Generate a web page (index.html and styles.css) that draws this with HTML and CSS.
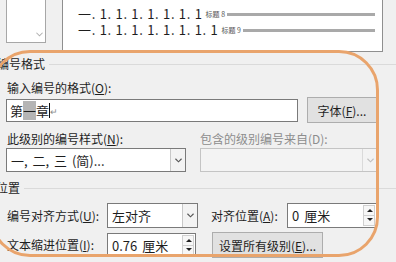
FILE: index.html
```html
<!DOCTYPE html>
<html lang="zh-CN">
<head>
    <meta charset="UTF-8">
    <meta name="viewport" content="width=device-width, initial-scale=1.0">
    <title>定义新多级列表</title>
    <link rel="stylesheet" href="styles.css">
</head>
<body>
    <div class="dialog">
        <!-- 级别列表 + 预览 -->
        <div class="top">
            <div class="levels">
                <svg class="levels-chev" viewBox="0 0 8 5"><polyline points="0.5,0.5 4,4 7.5,0.5"/></svg>
            </div>
            <div class="preview">
                <div class="pv-line">
                    <span class="pv-num">一. 1. 1. 1. 1. 1. 1. 1</span>
                    <span class="pv-tag">标题 8</span>
                    <span class="pv-bar"></span>
                </div>
                <div class="pv-line">
                    <span class="pv-num">一. 1. 1. 1. 1. 1. 1. 1. 1</span>
                    <span class="pv-tag">标题 9</span>
                    <span class="pv-bar"></span>
                </div>
            </div>
        </div>

        <!-- 编号格式 -->
        <div class="group-title title-format"><span class="title-text">编号格式</span><span class="title-line"></span></div>

        <div class="label label-input">输入编号的格式(<u>O</u>):</div>
        <div class="row row-input">
            <div class="textbox format-box"><span>第</span><span class="sel">一</span><span>章</span><span class="caret"></span><span class="para">↵</span></div>
            <button class="btn btn-font">字体(<u>F</u>)...</button>
        </div>

        <div class="row row-labels">
            <div class="label col-left">此级别的编号样式(<u>N</u>):</div>
            <div class="label disabled">包含的级别编号来自(D):</div>
        </div>
        <div class="row row-selects">
            <div class="select style-select">
                <span class="value">一, 二, 三 (简)...</span>
                <span class="drop"><svg viewBox="0 0 8 5"><polyline points="0.5,0.5 4,4 7.5,0.5"/></svg></span>
            </div>
            <div class="select include-select is-disabled">
                <span class="value"></span>
                <span class="drop"><svg viewBox="0 0 8 5"><polyline points="0.5,0.5 4,4 7.5,0.5"/></svg></span>
            </div>
        </div>

        <!-- 位置 -->
        <div class="group-title title-pos"><span class="title-text">位置</span><span class="title-line"></span></div>

        <div class="row row-pos1">
            <div class="label pos-label">编号对齐方式(<u>U</u>):</div>
            <div class="select align-select">
                <span class="value">左对齐</span>
                <span class="drop"><svg viewBox="0 0 8 5"><polyline points="0.5,0.5 4,4 7.5,0.5"/></svg></span>
            </div>
            <div class="label at-label">对齐位置(<u>A</u>):</div>
            <div class="spin at-spin">
                <span class="value">0 厘米</span>
                <span class="spin-btns"><span class="up"></span><span class="down"></span></span>
            </div>
        </div>
        <div class="row row-pos2">
            <div class="label pos-label">文本缩进位置(<u>I</u>):</div>
            <div class="spin indent-spin">
                <span class="value">0.76 厘米</span>
                <span class="spin-btns"><span class="up"></span><span class="down"></span></span>
            </div>
            <button class="btn btn-all">设置所有级别(<u>E</u>)...</button>
        </div>
    </div>

    <!-- 标注圈 -->
    <div class="ring"></div>
</body>
</html>
```

FILE: styles.css
```css
body {
    margin: 0;
    width: 396px;
    height: 262px;
    overflow: hidden;
    position: relative;
    background-color: #f0f0f0;
    font-family: "Noto Sans CJK SC", sans-serif;
    font-size: 12px;
    color: #1e1e1e;
}
u {
    text-decoration: underline;
    text-underline-offset: 1px;
}
.dialog {
    display: flex;
    flex-direction: column;
}
.top {
    display: flex;
    height: 52px;
}
.levels {
    position: relative;
    margin: -1px 0 0 6px;
    width: 40px;
    height: 44px;
    box-sizing: border-box;
    background-color: white;
    border: 1px solid #a7a7a7;
}
.levels-chev {
    position: absolute;
    right: 2px;
    bottom: 5px;
    width: 7px;
    height: 5px;
    fill: none;
    stroke: #b0b0b0;
    stroke-width: 1.2;
}
.preview {
    margin: -1px 0 0 16px;
    width: 321px;
    height: 53px;
    box-sizing: border-box;
    background-color: white;
    border: 1px solid #8f8f8f;
    padding: 6px 7px 0 15px;
}
.pv-line {
    display: flex;
    align-items: center;
    height: 16px;
}
.pv-num {
    font-size: 13px;
    letter-spacing: 0.7px;
    white-space: nowrap;
    line-height: 16px;
}
.pv-tag {
    font-size: 7px;
    color: #555;
    margin-left: 3px;
    white-space: nowrap;
}
.pv-bar {
    flex: 1;
    height: 3px;
    margin-left: 2px;
    background-color: #a9a9a9;
}
.group-title {
    display: flex;
    align-items: center;
    height: 16px;
    line-height: 16px;
}
.title-text {
    white-space: nowrap;
}
.title-line {
    flex: 1;
    height: 1px;
    margin-left: 4px;
    background-color: #dadada;
}
.title-format {
    margin: 4px 0 0 -3px;
}
.title-pos {
    margin: 8px 0 0 -4px;
}
.label {
    height: 16px;
    line-height: 16px;
    white-space: nowrap;
}
.label-input {
    margin: 8px 0 0 7px;
}
.row {
    display: flex;
    align-items: center;
}
.row-input {
    margin: 1px 0 0 6px;
    height: 26px;
    gap: 9px;
}
.textbox {
    display: flex;
    align-items: center;
    box-sizing: border-box;
    height: 23px;
    background-color: white;
    border: 1px solid #7a7a7a;
    padding-left: 3px;
    font-size: 13px;
}
.format-box {
    width: 292px;
}
.sel {
    background-color: #b5b5b5;
}
.caret {
    width: 1px;
    height: 15px;
    background-color: #111;
}
.para {
    font-size: 9px;
    color: #8a8a8a;
    margin-top: 3px;
}
.btn {
    box-sizing: border-box;
    height: 26px;
    background-color: #e1e1e1;
    border: 1px solid #adadad;
    font-family: inherit;
    font-size: 12px;
    color: #1e1e1e;
    padding: 0;
}
.btn-font {
    width: 70px;
}
.row-labels {
    margin: 8px 0 0 7px;
}
.col-left {
    width: 193px;
}
.disabled {
    color: #8d8d8d;
}
.row-selects {
    margin: 1px 0 0 6px;
    gap: 14px;
}
.select, .spin {
    display: flex;
    align-items: center;
    box-sizing: border-box;
    height: 24px;
    background-color: white;
    border: 1px solid #7a7a7a;
    font-size: 13px;
}
.select .value, .spin .value {
    flex: 1;
    padding-left: 4px;
    white-space: nowrap;
    word-spacing: 2px;
}
.drop {
    display: flex;
    align-items: center;
    justify-content: center;
    width: 15px;
    height: 100%;
    box-sizing: border-box;
    border-left: 1px solid #c8c8c8;
    background-color: #f3f3f3;
}
.drop svg {
    width: 7px;
    height: 5px;
    fill: none;
    stroke: #555;
    stroke-width: 1.3;
}
.style-select {
    width: 180px;
}
.include-select {
    width: 178px;
}
.is-disabled {
    background-color: #f3f3f3;
    border-color: #c4c4c4;
}
.is-disabled .drop {
    border-left-color: #dadada;
}
.is-disabled .drop svg {
    stroke: #c0c0c0;
}
.row-pos1 {
    margin: 7px 0 0 7px;
    height: 25px;
}
.row-pos2 {
    margin: 4px 0 0 7px;
    height: 26px;
}
.pos-label {
    width: 100px;
}
.align-select {
    width: 91px;
    height: 25px;
}
.at-label {
    width: 76px;
    margin-left: 13px;
}
.at-spin {
    width: 90px;
    height: 25px;
}
.indent-spin {
    width: 89px;
}
.spin-btns {
    display: flex;
    flex-direction: column;
    width: 12px;
    margin-right: 1px;
}
.spin-btns span {
    position: relative;
    height: 9px;
    border: 1px solid #d0d0d0;
    background-color: #f7f7f7;
}
.spin-btns .down {
    border-top: none;
}
.spin-btns span::after {
    content: "";
    position: absolute;
    left: 3px;
    top: 3px;
    border-left: 3px solid transparent;
    border-right: 3px solid transparent;
}
.spin-btns .up::after {
    border-bottom: 3px solid #222;
}
.spin-btns .down::after {
    top: 2px;
    border-top: 3px solid #222;
}
.btn-all {
    width: 111px;
    margin-left: 16px;
}
.ring {
    position: absolute;
    left: -10px;
    top: 50px;
    width: 389px;
    height: 207px;
    box-sizing: border-box;
    border: 3px solid #e9a46c;
    border-radius: 40px;
    pointer-events: none;
}
```
